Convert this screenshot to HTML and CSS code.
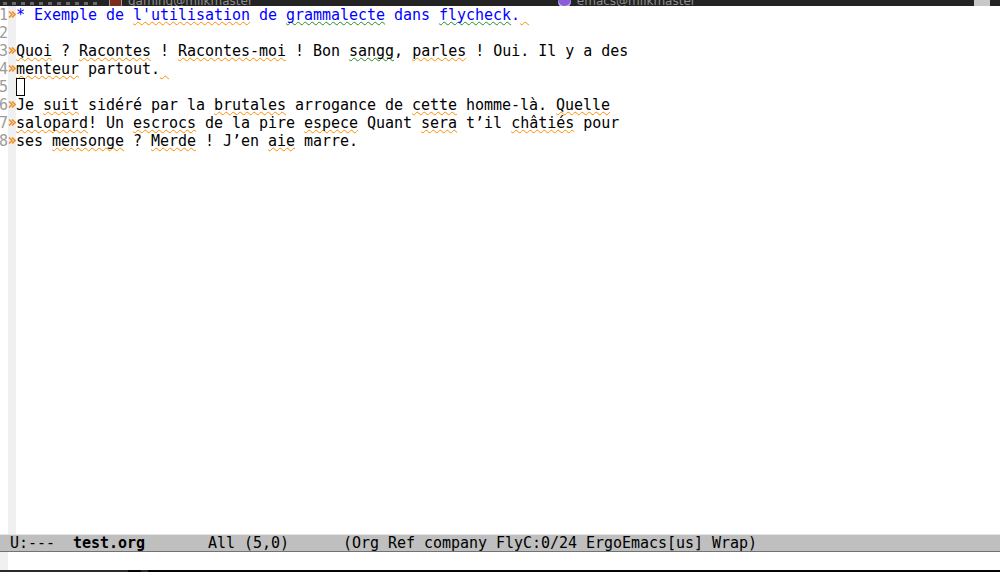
FILE: index.html
```html
<!DOCTYPE html>
<html>
<head>
<meta charset="utf-8">
<link rel="stylesheet" href="styles.css">
</head>
<body>
<div class="screen">
  <div class="topbar">
    <div class="tb-dots"><i></i><i></i><i></i><i></i><i></i><i></i><i></i><i></i><i></i><i></i><i></i></div>
    <span class="tb-icon red"></span>
    <span class="tb-text">gaming@milkmaster</span>
    <span class="tb-icon purple"></span>
    <span class="tb-text">emacs@milkmaster</span>
    <span class="tb-spacer"></span>
    <span class="tb-icon grey"></span>
  </div>
  <div class="editor">
    <div class="nums"><div>1</div><div>2</div><div>3</div><div>4</div><div>5</div><div>6</div><div>7</div><div>8</div></div>
    <div class="fringe">
      <div class="fl"><svg class="chev" width="8" height="7" viewBox="0 0 8 7"><path d="M1 0.5 L4 3.5 L1 6.5 M4 0.5 L7 3.5 L4 6.5" /></svg></div>
      <div class="fl"></div>
      <div class="fl"><svg class="chev" width="8" height="7" viewBox="0 0 8 7"><path d="M1 0.5 L4 3.5 L1 6.5 M4 0.5 L7 3.5 L4 6.5" /></svg></div>
      <div class="fl"><svg class="chev" width="8" height="7" viewBox="0 0 8 7"><path d="M1 0.5 L4 3.5 L1 6.5 M4 0.5 L7 3.5 L4 6.5" /></svg></div>
      <div class="fl"></div>
      <div class="fl"><svg class="chev" width="8" height="7" viewBox="0 0 8 7"><path d="M1 0.5 L4 3.5 L1 6.5 M4 0.5 L7 3.5 L4 6.5" /></svg></div>
      <div class="fl"><svg class="chev" width="8" height="7" viewBox="0 0 8 7"><path d="M1 0.5 L4 3.5 L1 6.5 M4 0.5 L7 3.5 L4 6.5" /></svg></div>
      <div class="fl"><svg class="chev" width="8" height="7" viewBox="0 0 8 7"><path d="M1 0.5 L4 3.5 L1 6.5 M4 0.5 L7 3.5 L4 6.5" /></svg></div>
    </div>
    <div class="text">
<div class="ln h1">* Exemple de <span class="o">l'utilisation</span> de <span class="g">grammalecte</span> dans <span class="g">flycheck</span>.<span class="o"> </span></div>
<div class="ln"> </div>
<div class="ln"><span class="o">Quoi</span> ? <span class="o">Racontes</span> ! <span class="o">Racontes-moi</span> ! Bon <span class="g">sangg</span>, <span class="o">parles</span> ! Oui. Il y a des</div>
<div class="ln"><span class="o">menteur</span> partout.<span class="o"> </span></div>
<div class="ln"><span class="cursor"> </span></div>
<div class="ln">Je <span class="o">suit</span> sidéré par la <span class="o">brutales</span> arrogance de <span class="o">cette</span> homme-là. <span class="o">Quelle</span></div>
<div class="ln"><span class="o">salopard</span>! Un <span class="o">escrocs</span> de la pire <span class="o">espece</span> Quant <span class="o">sera</span> t’il <span class="o">châtiés</span> pour</div>
<div class="ln">ses <span class="o">mensonge</span> ? <span class="o">Merde</span> ! J’en <span class="o">aie</span> marre.</div>
    </div>
  </div>
  <div class="modeline"> U:---  <b>test.org</b>       All (5,0)      (Org Ref company FlyC:0/24 ErgoEmacs[us] Wrap)</div>
  <div class="minibuf"><div class="mb-fringe"></div></div>
  <div class="bottombar"><span class="bb-seg a"></span><span class="bb-seg b"></span></div>
</div>
</body>
</html>
```
FILE: styles.css
```css
html, body {
  margin: 0;
  padding: 0;
  background: #ffffff;
}
.screen {
  width: 1000px;
  height: 572px;
  display: flex;
  flex-direction: column;
  overflow: hidden;
  font-family: "DejaVu Sans Mono", monospace;
  font-size: 15px;
}
.topbar {
  height: 6px;
  flex: none;
  background: #232323;
  display: flex;
  align-items: flex-end;
  overflow: hidden;
}
.tb-dots {
  display: flex;
  gap: 5px;
  margin-left: 3px;
  align-items: flex-end;
}
.tb-dots i {
  display: block;
  width: 4px;
  height: 3px;
  background: #6a6a6a;
  margin-bottom: 1px;
}
.tb-icon {
  display: block;
  width: 13px;
  height: 14px;
  flex: none;
  margin-bottom: -2px;
}
.tb-icon.red {
  margin-left: 12px;
  background: #7a2a1e;
  border: 1px solid #9a9a9a;
  box-sizing: border-box;
}
.tb-icon.purple {
  margin-left: 305px;
  border-radius: 50%;
  background: #8a5fd6;
  box-shadow: inset 0 -2px 0 #c9b4ff;
}
.tb-icon.grey {
  width: 16px;
  background: #c8c8c8;
  margin-right: 10px;
  margin-bottom: -4px;
}
.tb-text {
  font-family: "DejaVu Sans", sans-serif;
  font-size: 12px;
  line-height: 12px;
  color: #8d8d8d;
  margin-left: 6px;
  margin-bottom: -1px;
  white-space: nowrap;
}
.tb-spacer {
  flex: 1;
}
.editor {
  flex: none;
  height: 528px;
  display: flex;
  line-height: 18px;
}
.nums {
  width: 8px;
  flex: none;
  color: #9b9b9b;
  margin-left: -1px;
  padding-right: 1px;
}
.nums div {
  height: 18px;
}
.fringe {
  width: 8px;
  flex: none;
  background: #f0f0f0;
}
.fl {
  height: 18px;
  display: flex;
  align-items: center;
}
.chev {
  display: block;
  margin-top: -1px;
}
.chev path {
  fill: none;
  stroke: #f0902a;
  stroke-width: 1.6;
}
.text {
  flex: 1;
  color: #000000;
}
.ln {
  height: 18px;
  white-space: pre;
  letter-spacing: -0.03px;
}
.h1 {
  color: #0000ff;
}
.o, .g {
  text-decoration-line: underline;
  text-decoration-style: wavy;
  text-decoration-thickness: 1px;
  text-underline-offset: 1px;
  text-decoration-skip-ink: none;
}
.o {
  text-decoration-color: #ff8c00;
}
.g {
  text-decoration-color: #228b22;
}
.cursor {
  display: inline-block;
  width: 9px;
  height: 18px;
  box-sizing: border-box;
  border: 1px solid #000000;
  vertical-align: top;
}
.modeline {
  flex: none;
  height: 18px;
  box-sizing: border-box;
  background: #bfbfbf;
  border-top: 1px solid #e4e4e4;
  border-bottom: 1px solid #737373;
  line-height: 16px;
  white-space: pre;
  color: #000000;
  padding-left: 1px;
  letter-spacing: -0.03px;
}
.modeline b {
  font-weight: bold;
}
.minibuf {
  flex: none;
  height: 18px;
  display: flex;
}
.mb-fringe {
  width: 8px;
  background: #f0f0f0;
}
.bottombar {
  flex: none;
  height: 2px;
  background: #050505;
  display: flex;
}
.bb-seg.a {
  width: 128px;
  background: #2a2a2a;
}
.bb-seg.b {
  width: 7px;
  margin-left: 13px;
  background: #2a2a2a;
}
```
